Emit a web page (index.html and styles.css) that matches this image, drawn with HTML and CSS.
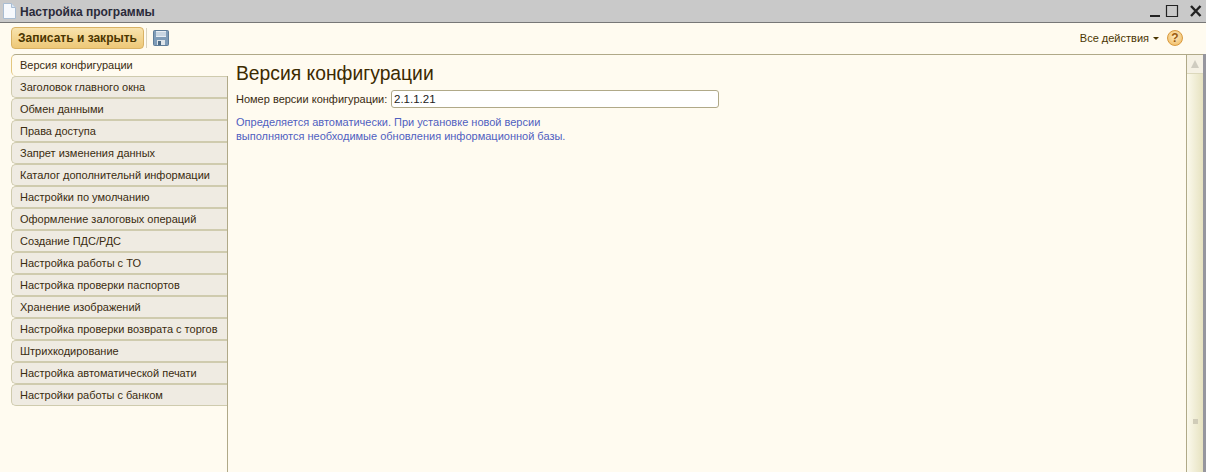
FILE: index.html
```html
<!DOCTYPE html>
<html lang="ru">
<head>
  <meta charset="UTF-8" />
  <title>Настройка программы</title>
  <link rel="stylesheet" href="styles.css">
</head>
<body>
  <div class="titlebar">
    <svg class="doc-icon" width="15" height="18" viewBox="0 0 15 18">
      <path d="M1.500 1.500h8l4 4v11h-12z" fill="#f6f9fd" stroke="#a9bdd3"/>
      <path d="M9.500 1.500v4h4" fill="#dbe6f2" stroke="#a9bdd3"/>
    </svg>
    <span class="title">Настройка программы</span>
    <div class="win-buttons">
      <svg width="14" height="14" viewBox="0 0 14 14"><path d="M1 12h10" stroke="#222" stroke-width="2"/></svg>
      <svg class="win-max" width="14" height="14" viewBox="0 0 14 14"><path d="M1.500 1.500h11v11h-11z" fill="none" stroke="#222" stroke-width="1.200"/></svg>
      <svg width="14" height="14" viewBox="0 0 14 14"><path d="M2 2l9.500 10M11.500 2l-9.500 10" stroke="#222" stroke-width="2.400"/></svg>
    </div>
  </div>

  <div class="toolbar">
    <button class="save-close" type="button">Записать и закрыть</button>
    <div class="sep"></div>
    <svg class="save-icon" width="16" height="16" viewBox="0 0 16 16">
      <rect x="0.500" y="0.500" width="15" height="15" rx="1" fill="#7f9cb8" stroke="#5f7d99"/>
      <rect x="3" y="1" width="10" height="6" fill="#e8eef4"/>
      <path d="M3 3h10M3 5h10" stroke="#a8bccf"/>
      <rect x="4" y="10" width="8" height="5" fill="#dfe5ea"/>
      <rect x="5" y="11" width="3" height="4" fill="#4f6b85"/>
    </svg>
    <div class="actions">
      <span>Все действия</span>
      <span class="caret"></span>
      <span class="help">?</span>
    </div>
  </div>

  <div class="main">
    <ul class="tabs">
      <li class="tab active">Версия конфигурации</li>
      <li class="tab">Заголовок главного окна</li>
      <li class="tab">Обмен данными</li>
      <li class="tab">Права доступа</li>
      <li class="tab">Запрет изменения данных</li>
      <li class="tab">Каталог дополнительнй информации</li>
      <li class="tab">Настройки по умолчанию</li>
      <li class="tab">Оформление залоговых операций</li>
      <li class="tab">Создание ПДС/РДС</li>
      <li class="tab">Настройка работы с ТО</li>
      <li class="tab">Настройка проверки паспортов</li>
      <li class="tab">Хранение изображений</li>
      <li class="tab">Настройка проверки возврата с торгов</li>
      <li class="tab">Штрихкодирование</li>
      <li class="tab">Настройка автоматической печати</li>
      <li class="tab">Настройки работы с банком</li>
    </ul>

    <div class="panel">
      <h1>Версия конфигурации</h1>
      <div class="field">
        <label for="version">Номер версии конфигурации:</label>
        <input id="version" type="text" value="2.1.1.21" />
      </div>
      <p class="note">Определяется автоматически. При установке новой версии<br />выполняются необходимые обновления информационной базы.</p>
    </div>

    <div class="scrollbar">
      <div class="scroll-up"><span class="arrow"></span></div>
      <div class="scroll-track"><span class="grip"></span></div>
    </div>
  </div>
</body>
</html>
```

FILE: styles.css
```css
html, body {
  height: 100%;
}
body {
  margin: 0;
  overflow: hidden;
  display: flex;
  flex-direction: column;
  font-family: "Liberation Sans", Arial, sans-serif;
  font-size: 11px;
  color: #3a2c10;
  background-color: #fffbf0;
}

.titlebar {
  height: 22px;
  flex: none;
  display: flex;
  align-items: center;
  background-color: #c9c9c9;
  border-bottom: 1px solid #777;
}
.doc-icon {
  margin-left: 2px;
}
.title {
  margin-left: 3px;
  padding-top: 2px;
  font-size: 12px;
  font-weight: bold;
  color: #2a2a3a;
}
.win-buttons {
  margin-left: auto;
  margin-right: 3px;
  display: flex;
  gap: 2px;
}
.win-max {
  margin-right: 8px;
}

.toolbar {
  height: 29px;
  flex: none;
  display: flex;
  align-items: center;
  padding-left: 11px;
  padding-bottom: 2px;
}
.save-close {
  width: 133px;
  height: 22px;
  padding: 0;
  font-family: inherit;
  font-size: 12px;
  font-weight: bold;
  color: #4a3500;
  background: linear-gradient(#f8e3ae, #eec877);
  border: 1px solid #d9b264;
  border-radius: 4px;
}
.sep {
  width: 1px;
  height: 20px;
  margin-left: 2px;
  background-color: #d8d3c0;
}
.save-icon {
  margin-left: 6px;
}
.actions {
  margin-left: auto;
  margin-right: 23px;
  display: flex;
  align-items: center;
  color: #4a3500;
}
.caret {
  margin-left: 4px;
  margin-top: 2px;
  border-top: 3px solid #4a3500;
  border-left: 3px solid transparent;
  border-right: 3px solid transparent;
}
.help {
  width: 16px;
  height: 16px;
  margin-left: 8px;
  text-align: center;
  line-height: 14px;
  font-size: 12px;
  font-weight: bold;
  color: #9a5a10;
  border-radius: 50%;
  background: radial-gradient(circle at 50% 40%, #fdebc0, #efb65a);
  border: 1px solid #d99a3e;
  box-sizing: border-box;
}

.main {
  flex: 1;
  display: flex;
  min-height: 0;
  padding-left: 11px;
  padding-right: 3px;
  background-color: #fffbf0;
  position: relative;
}
.tabs {
  width: 216px;
  flex: none;
  margin: 0;
  padding: 0;
  list-style: none;
  border-right: 1px solid #b0a988;
}
.tab {
  height: 20px;
  line-height: 20px;
  padding-left: 8px;
  background-color: #efebe2;
  border: 1px solid #cfcbae;
  border-right: 0;
  border-top-left-radius: 5px;
  border-bottom-left-radius: 5px;
}
.tab.active {
  position: relative;
  width: 100%;
  background-color: #fffbf0;
  border-color: #b0a988;
  border-left-color: #e3c77f;
  border-bottom: 0;
  height: 21px;
  line-height: 21px;
}

.panel {
  flex: 1;
  padding: 9px 8px 0 8px;
  border-top: 1px solid #b0a988;
}
.panel h1 {
  margin: 0;
  font-size: 19.300px;
  font-weight: normal;
  line-height: 20px;
  color: #3c2a00;
}
.field {
  display: flex;
  align-items: center;
  margin-top: 6px;
}
.field label {
  width: 155px;
}
.field input {
  width: 328px;
  height: 18px;
  padding: 0 2px;
  box-sizing: border-box;
  font-family: inherit;
  font-size: 11.500px;
  color: #222;
  background-color: #fff;
  border: 1px solid #b0a988;
  border-radius: 3px;
}
.note {
  margin: 7px 0 0;
  line-height: 14px;
  color: #4f60c0;
}

.scrollbar {
  width: 16px;
  flex: none;
  display: flex;
  flex-direction: column;
  border-left: 1px solid #b0a988;
  border-top: 1px solid #b0a988;
}
.scroll-up {
  height: 18px;
  display: flex;
  align-items: center;
  justify-content: center;
  background-color: #f5f1e4;
  border-bottom: 1px solid #dcd8bc;
}
.arrow {
  border-bottom: 8px solid #cfccc0;
  border-left: 4px solid transparent;
  border-right: 4px solid transparent;
}
.scroll-track {
  flex: 1;
  display: flex;
  align-items: flex-end;
  justify-content: center;
  padding-bottom: 48px;
  background: linear-gradient(to right, #fbf9ec, #e6e2c0);
}
.grip {
  width: 5px;
  height: 5px;
  background-color: #d0ccb8;
}
.main::after {
  content: "";
  position: absolute;
  top: 0;
  right: 0;
  bottom: 0;
  width: 3px;
  background-color: #96969e;
}
```
